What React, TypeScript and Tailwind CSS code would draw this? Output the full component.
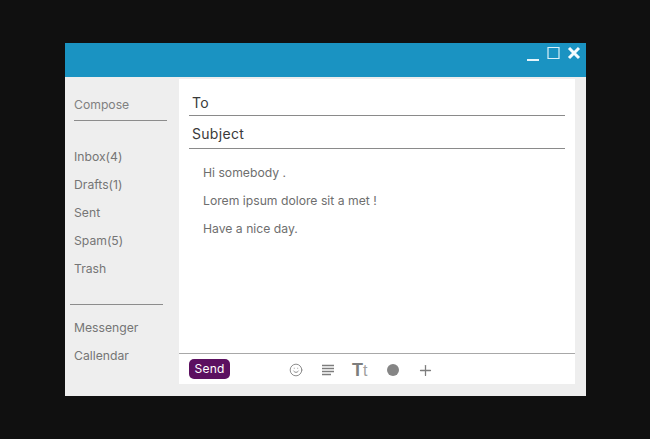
import { Plus, Smile } from "lucide-react";

const folders = ["Inbox(4)", "Drafts(1)", "Sent", "Spam(5)", "Trash"];
const apps = ["Messenger", "Callendar"];
const body = ["Hi somebody .", "Lorem ipsum dolore sit a met !", "Have a nice day."];

function NavItem({ label }: { label: string }) {
  return <div className="h-[28px] leading-[28px] text-[12.2px] text-[#757575]">{label}</div>;
}

export default function App() {
  return (
    <div className="h-[439px] w-[650px] overflow-hidden bg-[#101010] pt-[43px] pl-[65px] font-['Inter',sans-serif]">
      <div className="flex h-[353px] w-[521px] flex-col bg-[#eeeeee]">
        {/* title bar */}
        <div className="flex h-[34px] shrink-0 items-start justify-end bg-[#1a93c2] pt-[3px] pr-[5px]">
          <svg width="12" height="16" viewBox="0 0 12 16" className="mr-[8px]">
            <path d="M0 14h12" stroke="#e6f5fb" strokeWidth="2" />
          </svg>
          <svg width="13" height="16" viewBox="0 0 13 16" className="mr-[7px]">
            <path d="M1 1.5h11v11H1z" fill="none" stroke="#d9f0f9" strokeWidth="1.2" />
          </svg>
          <svg width="14" height="16" viewBox="0 0 14 16">
            <path d="M2 2l10 10M12 2L2 12" stroke="#f4fbfe" strokeWidth="3" />
          </svg>
        </div>

        <div className="flex min-h-0 flex-1 pt-[2px] pb-[12px]">
          {/* sidebar */}
          <div className="flex w-[114px] shrink-0 flex-col pt-[12px] pl-[5px]">
            <div className="ml-[4px] w-[93px] border-b border-[#8c8c8c] pb-[1px]">
              <div className="h-[28px] text-[12.2px] leading-[27px] text-[#808080]">Compose</div>
            </div>
            <div className="mt-[22px] ml-[4px]">
              {folders.map((f) => (
                <NavItem key={f} label={f} />
              ))}
            </div>
            <div className="mt-[21px] w-[93px] border-b border-[#8c8c8c]" />
            <div className="mt-[9px] ml-[4px]">
              {apps.map((a) => (
                <NavItem key={a} label={a} />
              ))}
            </div>
          </div>

          {/* compose panel */}
          <div className="flex w-[396px] flex-col bg-white">
            <div className="flex-1">
              <div className="mx-[10px] flex h-[37px] items-end border-b border-[#8a8a8a] pb-[2px] pl-[3px] text-[14px] tracking-[0.3px] text-[#3a3a3a]">
                To
              </div>
              <div className="mx-[10px] flex h-[33px] items-end border-b border-[#8a8a8a] pb-[4px] pl-[3px] text-[14px] tracking-[0.3px] text-[#3a3a3a]">
                Subject
              </div>
              <div className="pt-[10px] pl-[24px]">
                {body.map((line) => (
                  <div key={line} className="h-[28px] text-[12.2px] leading-[28px] text-[#6e6e6e]">
                    {line}
                  </div>
                ))}
              </div>
            </div>

            {/* toolbar */}
            <div className="flex h-[31px] shrink-0 items-center border-t border-[#a8a8a8] pl-[10px]">
              <div className="flex h-[20px] w-[41px] items-center justify-center rounded-[5px] bg-[#5c1060] text-[12px] tracking-[0.2px] text-white">
                Send
              </div>
              <div className="mt-[2px] ml-[59px] flex items-center">
                <Smile size={14} strokeWidth={1.6} className="text-[#858585]" />
                <svg width="14" height="12" viewBox="0 0 14 12" className="ml-[18px]">
                  <path d="M1 1.5h12M1 4.5h12M1 7.5h12M1 10.5h9" stroke="#7d7d7d" strokeWidth="1.6" />
                </svg>
                <div className="ml-[17px] flex w-[18px] items-baseline font-['Liberation_Sans',sans-serif] leading-none">
                  <span className="text-[18px] font-bold text-[#7d7d7d]">T</span>
                  <span className="text-[16px] text-[#a0a0a0]">t</span>
                </div>
                <div className="ml-[17px] h-[12px] w-[12px] rounded-full bg-[#858585]" />
                <Plus size={17} strokeWidth={1.8} className="ml-[18px] text-[#7d7d7d]" />
              </div>
            </div>
          </div>
        </div>
      </div>
    </div>
  );
}
